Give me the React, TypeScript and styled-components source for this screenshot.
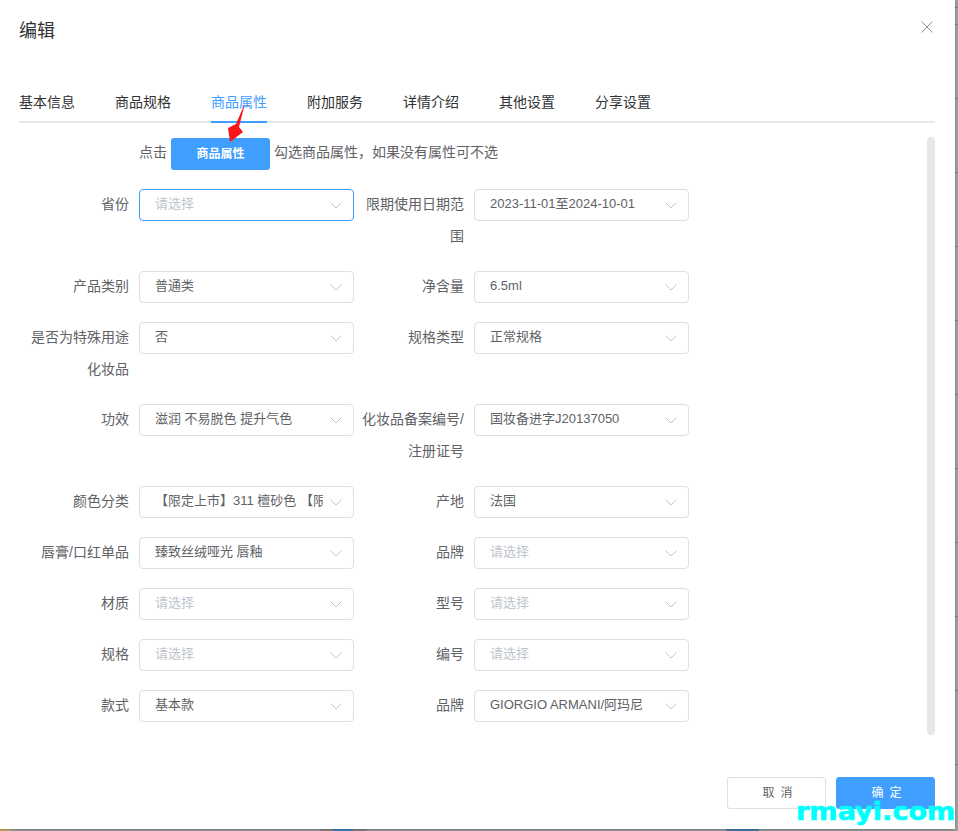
import styled, { createGlobalStyle } from "styled-components";

const GlobalStyle = createGlobalStyle`
  html, body {
    margin: 0;
    padding: 0;
    background: #a0a0a0;
  }
  * {
    box-sizing: border-box;
  }
`;

const Backdrop = styled.div`
  position: relative;
  width: 958px;
  height: 831px;
  overflow: hidden;
  font-family: "Liberation Sans", "Noto Sans CJK SC", sans-serif;
  background-color: #a3a3a3;
  background-image:
    linear-gradient(to right, #c9b46a 0 10px, transparent 10px),
    linear-gradient(to right, transparent 320px, #8a8a8a 320px 333px, #3f86c2 333px 353px, #8a8a8a 353px 367px, transparent 367px),
    linear-gradient(to right, transparent 726px, #4a7fb0 726px 759px, transparent 759px),
    repeating-linear-gradient(to bottom, #7d7d7d 0 1px, transparent 1px 74px);
  background-position: 0 829px, 0 829px, 0 829px, 0 24px;
  background-size: 100% 2px, 100% 2px, 100% 2px, 100% 100%;
  background-repeat: no-repeat, no-repeat, no-repeat, repeat;
`;

const Dialog = styled.div`
  display: flex;
  flex-direction: column;
  width: 955px;
  height: 829px;
  padding: 0 20px 0 19px;
  background: #fff;
  box-shadow: 0 1px 3px rgba(0, 0, 0, 0.3);
`;

const Header = styled.div`
  display: flex;
  justify-content: space-between;
  align-items: flex-start;
  height: 81px;
  padding-top: 19px;
`;

const Title = styled.div`
  font-size: 18px;
  line-height: 24px;
  color: #303133;
`;

const CloseIcon = styled.svg`
  width: 12px;
  height: 12px;
  margin: 2px 2px 0 0;
  stroke: #909399;
  stroke-width: 1;
  fill: none;
`;

const Tabs = styled.div`
  display: flex;
  gap: 40px;
  height: 42px;
  border-bottom: 2px solid #e4e7ed;
`;

const Tab = styled.div<{ $active?: boolean }>`
  height: 42px;
  line-height: 42px;
  font-size: 14px;
  color: ${(p) => (p.$active ? "#409eff" : "#303133")};
  border-bottom: 2px solid ${(p) => (p.$active ? "#409eff" : "transparent")};
`;

const Body = styled.div`
  display: flex;
  justify-content: space-between;
  margin-top: 14px;
  height: 598px;
`;

const Form = styled.div`
  padding-top: 1px;
`;

const Hint = styled.div`
  display: flex;
  align-items: flex-start;
  gap: 4px;
  height: 32px;
  margin: 0 0 19px 120px;
  font-size: 14px;
  line-height: 29px;
  color: #606266;
`;

const HintButton = styled.div`
  width: 99px;
  height: 32px;
  line-height: 32px;
  text-align: center;
  border-radius: 3px;
  background: #409eff;
  color: #fff;
  font-size: 12px;
  font-weight: 600;
`;

const Grid = styled.div`
  display: grid;
  grid-template-columns: 335px 335px;
  row-gap: 18px;
  align-items: start;
`;

const Item = styled.div`
  display: flex;
  min-height: 33px;
`;

const Label = styled.div`
  flex: none;
  width: 120px;
  margin: -1px 0 1px;
  padding-right: 10px;
  padding-left: 4px;
  text-align: right;
  line-height: 32px;
  font-size: 14px;
  color: #606266;
`;

const Select = styled.div<{ $focused?: boolean }>`
  position: relative;
  flex: none;
  width: 215px;
  height: 32px;
  padding: 0 30px 0 15px;
  border: 1px solid ${(p) => (p.$focused ? "#409eff" : "#dcdfe6")};
  border-radius: 4px;
  background: #fff;
`;

const SelectText = styled.div<{ $placeholder?: boolean }>`
  overflow: hidden;
  white-space: nowrap;
  line-height: 28px;
  font-size: 13px;
  color: ${(p) => (p.$placeholder ? "#c0c4cc" : "#606266")};
`;

const Chevron = styled.svg`
  position: absolute;
  top: 12px;
  right: 11px;
  width: 12px;
  height: 7px;
  fill: none;
  stroke: #c0c4cc;
  stroke-width: 1;
`;

const ScrollThumb = styled.div`
  width: 8px;
  height: 598px;
  border-radius: 4px;
  background: #e8e8e8;
`;

const Footer = styled.div`
  display: flex;
  justify-content: flex-end;
  gap: 10px;
  margin-top: 42px;
`;

const FooterButton = styled.div<{ $primary?: boolean }>`
  width: 99px;
  height: 32px;
  padding-left: 8px;
  line-height: 30px;
  text-align: center;
  border-radius: 3px;
  font-size: 12px;
  letter-spacing: 6px;
  border: 1px solid ${(p) => (p.$primary ? "#409eff" : "#dcdfe6")};
  background: ${(p) => (p.$primary ? "#409eff" : "#fff")};
  color: ${(p) => (p.$primary ? "#fff" : "#606266")};
`;

const Arrow = styled.svg`
  position: absolute;
  left: 225px;
  top: 101px;
  width: 24px;
  height: 42px;
`;

const Watermark = styled.div`
  position: absolute;
  left: 796px;
  top: 795px;
  font-family: "DejaVu Sans", sans-serif;
  font-size: 24px;
  line-height: 34px;
  font-weight: 700;
  color: #00ffff;
  -webkit-text-stroke: 0.6px #00ffff;
  white-space: nowrap;
  transform: scaleX(1.13);
  transform-origin: left center;
`;

const tabs = ["基本信息", "商品规格", "商品属性", "附加服务", "详情介绍", "其他设置", "分享设置"];

type Field = { label: string; value?: string; focused?: boolean };

const fields: Field[] = [
  { label: "省份", focused: true },
  { label: "限期使用日期范围", value: "2023-11-01至2024-10-01" },
  { label: "产品类别", value: "普通类" },
  { label: "净含量", value: "6.5ml" },
  { label: "是否为特殊用途化妆品", value: "否" },
  { label: "规格类型", value: "正常规格" },
  { label: "功效", value: "滋润 不易脱色 提升气色" },
  { label: "化妆品备案编号/注册证号", value: "国妆备进字J20137050" },
  { label: "颜色分类", value: "【限定上市】311 檀砂色 【限定上市】" },
  { label: "产地", value: "法国" },
  { label: "唇膏/口红单品", value: "臻致丝绒哑光 唇釉" },
  { label: "品牌" },
  { label: "材质" },
  { label: "型号" },
  { label: "规格" },
  { label: "编号" },
  { label: "款式", value: "基本款" },
  { label: "品牌", value: "GIORGIO ARMANI/阿玛尼" },
];

export default function App() {
  return (
    <>
      <GlobalStyle />
      <Backdrop>
        <Dialog>
          <Header>
            <Title>编辑</Title>
            <CloseIcon viewBox="0 0 12 12">
              <path d="M0.5 0.5 L11.5 11.5 M11.5 0.5 L0.5 11.5" />
            </CloseIcon>
          </Header>
          <Tabs>
            {tabs.map((t) => (
              <Tab key={t} $active={t === "商品属性"}>
                {t}
              </Tab>
            ))}
          </Tabs>
          <Body>
            <Form>
              <Hint>
                点击
                <HintButton>商品属性</HintButton>
                勾选商品属性，如果没有属性可不选
              </Hint>
              <Grid>
                {fields.map((f, i) => (
                  <Item key={i}>
                    <Label>{f.label}</Label>
                    <Select $focused={f.focused}>
                      <SelectText $placeholder={!f.value}>{f.value ?? "请选择"}</SelectText>
                      <Chevron viewBox="0 0 12 7">
                        <path d="M0.5 0.5 L6 6 L11.5 0.5" />
                      </Chevron>
                    </Select>
                  </Item>
                ))}
              </Grid>
            </Form>
            <ScrollThumb />
          </Body>
          <Footer>
            <FooterButton>取消</FooterButton>
            <FooterButton $primary>确定</FooterButton>
          </Footer>
        </Dialog>
        <Arrow viewBox="0 0 24 42">
          <path d="M20 2 L11 23 L3 27 L5 41 L18 31 L14 26 Z" fill="#f8151a" />
        </Arrow>
        <Watermark>rmayi.com</Watermark>
      </Backdrop>
    </>
  );
}
